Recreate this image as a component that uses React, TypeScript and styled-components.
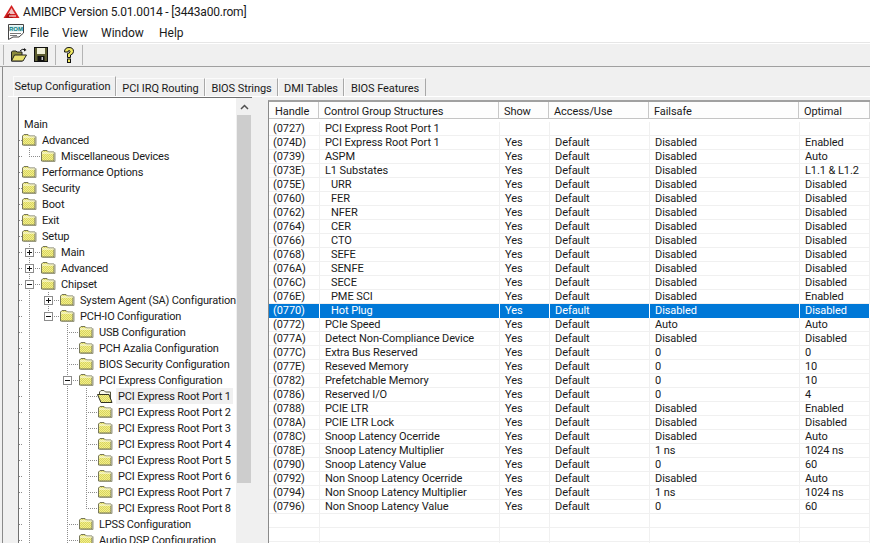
import React from "react";
import styled, { createGlobalStyle } from "styled-components";

const Global = createGlobalStyle`
  html, body { margin: 0; padding: 0; height: 100%; overflow: hidden; background: #f0f0f0; }
  #root { height: 100%; }
`;

const Window = styled.div`
  width: 870px; height: 543px; overflow: hidden; display: flex; flex-direction: column;
  font-family: Roboto, "Liberation Sans", Arial, sans-serif; font-size: 11px; letter-spacing: -0.08px; color: #1a1a1a; background: #f0f0f0;
`;
const TitleBar = styled.div`
  height: 22px; background: #fff; display: flex; align-items: center; gap: 3px; padding-left: 3px; box-sizing: border-box;
  font-size: 12px; letter-spacing: -0.2px; flex: none;
`;
const TitleText = styled.span` padding-top: 2px; `;
const MenuBar = styled.div`
  height: 21px; background: #fff; display: flex; align-items: center; padding-left: 7px; flex: none;
  font-size: 12px; letter-spacing: 0; border-bottom: 1px solid #e6e6e6; box-sizing: border-box;
`;
const MenuGap = styled.span` width: 5px; `;
const MenuItem = styled.span<{ $w: number }>` width: ${(p) => p.$w}px; padding-top: 2px; `;
const ToolBar = styled.div`
  height: 24px; flex: none; display: flex; align-items: center; padding-left: 3px; background: #f0f0f0; box-sizing: border-box;
  border-bottom: 1px solid #a0a0a0; box-shadow: inset 0 1px 0 #fff;
`;
const ToolSep = styled.span<{ $ml?: number }>`
  width: 1px; height: 20px; background: #b4b4b4; margin-left: ${(p) => p.$ml ?? 0}px;
`;
const ToolBtn = styled.span<{ $w: number }>`
  width: ${(p) => p.$w}px; height: 22px; display: flex; align-items: center; justify-content: center;
`;
const Workspace = styled.div`
  flex: 1; min-height: 0; display: flex; flex-direction: column; margin-left: 2px; padding: 9px 0 0 5px;
  border-left: 1px solid #8a8a8a; background: #f0f0f0;
`;
const TabStrip = styled.div` display: flex; height: 20px; flex: none; padding-left: 5px; align-items: flex-end; `;
const Tab = styled.div<{ $active?: boolean; $w: number }>`
  width: ${(p) => p.$w}px; height: ${(p) => (p.$active ? 20 : 18)}px; box-sizing: border-box;
  background: #f0f0f0; border-top: 1px solid #fbfbfb; border-left: 1px solid #fbfbfb; border-right: 1px solid #a8a8a8;
  display: flex; align-items: center; justify-content: center;
  padding-top: ${(p) => (p.$active ? 0 : 2)}px; padding-right: ${(p) => (p.$active ? 4 : 0)}px; white-space: nowrap;
`;
const TabPage = styled.div`
  flex: 1; min-height: 0; display: flex; background: #f0f0f0; border-top: 1px solid #fff; padding-left: 10px; gap: 16px;
`;
const TreePane = styled.div`
  width: 233px; flex: none; display: flex; background: #fff; overflow: hidden;
  border-left: 1px solid #707070; border-top: 1px solid #707070;
`;
const TreeList = styled.div` flex: 1; min-width: 0; padding-top: 18px; overflow: hidden; background: #fff; `;
const TreeRow = styled.div` height: 16px; display: flex; align-items: center; white-space: nowrap; `;
const Stub = styled.span`
  width: 3px; height: 16px; flex: none;
  background: repeating-linear-gradient(to right, #8c8c8c 0 1px, transparent 1px 2px) 0 8px / 100% 1px no-repeat;
`;
const PlainIndent = styled.span` width: 2px; flex: none; `;
const Guide = styled.span<{ $kind: G }>`
  width: 19px; height: 16px; flex: none; display: flex; align-items: center;
  ${(p) => (p.$kind === "blank" ? "" : `background:
    repeating-linear-gradient(to bottom, #8c8c8c 0 1px, transparent 1px 2px) 7px 0 / 1px ${p.$kind === "elbow" ? "9px" : "100%"} no-repeat
    ${p.$kind === "pipe" ? "" : ", repeating-linear-gradient(to right, #8c8c8c 0 1px, transparent 1px 2px) 7px 8px / 12px 1px no-repeat"};`)}
`;
const Expander = styled.span<{ $open: boolean }>`
  width: 9px; height: 9px; box-sizing: border-box; margin-left: 3px; border: 1px solid #8c8c8c; background-color: #fff;
  background-image: linear-gradient(#111, #111)${(p) => (p.$open ? "" : ", linear-gradient(#111, #111)")};
  background-size: 5px 1px${(p) => (p.$open ? "" : ", 1px 5px")};
  background-position: 1px 3px${(p) => (p.$open ? "" : ", 3px 1px")};
  background-repeat: no-repeat;
`;
const RowLabel = styled.span<{ $selected?: boolean }>`
  margin-left: 1px; padding: 0 2px; line-height: 18px; height: 16px; letter-spacing: -0.17px;
  background: ${(p) => (p.$selected ? "#f0f0f0" : "transparent")};
`;
const FolderBox = styled.span` width: 17px; height: 16px; flex: none; display: flex; align-items: center; `;

const ScrollBar = styled.div`
  width: 16px; flex: none; background: #f0f0f0; display: flex; flex-direction: column; box-sizing: border-box; padding: 0 1px;
`;
const ScrollArrow = styled.div` height: 17px; flex: none; display: flex; align-items: center; justify-content: center; `;
const ScrollThumb = styled.div` height: 368px; flex: none; background: #cdcdcd; `;

const TablePane = styled.div`
  flex: 1; min-width: 0; background: #fff; overflow: hidden; border-left: 1px solid #8a8a8a; border-top: 2px solid #a0a0a0;
  margin-top: 3px; display: flex; flex-direction: column;
`;
const HeaderRow = styled.div`
  display: grid; grid-template-columns: 49px 180px 50px 100px 150px 1fr; height: 17px; flex: none; box-sizing: border-box;
  border-bottom: 1px solid #c4c4c4; background: #fdfdfd; padding-left: 1px; margin-bottom: 3px;
`;
const HeaderCell = styled.div`
  padding-left: 5px; line-height: 20px; height: 16px; border-right: 1px solid #c8c8c8; white-space: nowrap;
`;
const DataRow = styled.div<{ $selected?: boolean }>`
  display: grid; grid-template-columns: 49px 180px 50px 100px 150px 1fr; height: 14px; flex: none; padding-left: 2px;
  background: ${(p) => (p.$selected ? "#0078d7" : "#fff")};
  color: ${(p) => (p.$selected ? "#fff" : "#1a1a1a")};
  box-shadow: inset 0 -1px 0 ${(p) => (p.$selected ? "#0078d7" : "#f0f0f0")};
`;
const DataCell = styled.div<{ $selected?: boolean; $sub?: boolean }>`
  padding-left: ${(p) => (p.$sub ? 11 : 5)}px; line-height: 14px;
  border-right: 1px solid ${(p) => (p.$selected ? "#fff" : "#f0f0f0")};
  white-space: nowrap; overflow: hidden;
  &:first-child { padding-left: 2px; }
`;

const Dither = () => (
  <defs>
    <pattern id="dither" width="2" height="2" patternUnits="userSpaceOnUse">
      <rect width="2" height="2" fill="#f4f08c" />
      <rect width="1" height="1" fill="#d8d460" />
      <rect x="1" y="1" width="1" height="1" fill="#d8d460" />
    </pattern>
  </defs>
);
const Folder = () => (
  <svg width="15" height="12" viewBox="0 0 15 12">
    <Dither />
    <path d="M0.5 11 V2 L2 0.5 H6 L7.5 2 H13 V11 Z" fill="url(#dither)" stroke="#77775a" />
    <path d="M1 3 H13" stroke="#fffff0" />
    <path d="M14 2.5 V11.5 H1.5" stroke="#9a9a80" fill="none" />
  </svg>
);
const OpenFolder = () => (
  <svg width="16" height="13" viewBox="0 0 16 13" style={{ marginLeft: -1 }}>
    <Dither />
    <path d="M2.5 4 V2 L4 0.5 H7 L8.5 2 H13.5 V12 H4 Z" fill="#f8f8ec" stroke="#55553f" />
    <path d="M0.5 4.5 H12 L15 12.5 H4 Z" fill="url(#dither)" stroke="#333322" />
  </svg>
);
const AmiLogo = () => (
  <svg width="17" height="15" viewBox="0 0 17 15">
    <path d="M8.5 1 L16.5 14 H0.5 Z" fill="#d42020" />
    <path d="M8.5 4 L12 10 H5 Z" fill="#f0c0c0" />
    <path d="M2 14 L6.5 9 L10 14 Z" fill="#a81010" />
    <path d="M6 12 H13" stroke="#fff" />
  </svg>
);
const RomIcon = () => (
  <svg width="18" height="18" viewBox="0 0 18 18">
    <path d="M1.5 1.5 H16.5 V10 L12 14 H6 L1.5 16.5 Z" fill="#fff" stroke="#444" />
    <rect x="2.5" y="2.5" width="13" height="6" fill="#d8f0f0" />
    <text x="9" y="8" textAnchor="middle" fontFamily="Liberation Sans, sans-serif" fontSize="6" fontWeight="700" fill="#0a7a80">ROM</text>
    <path d="M3 10.5 H14 M3 12.5 H10" stroke="#777" />
  </svg>
);
const OpenIcon = () => (
  <svg width="16" height="14" viewBox="0 0 16 14">
    <path d="M9 3 Q11 0.5 14 1.5" fill="none" stroke="#111" />
    <path d="M13 0 L15.5 2 L13 3.5" fill="#111" />
    <path d="M0.5 13 V4 L1.5 3 H5 L6 4 H11 V13 Z" fill="#8a8a3a" stroke="#222" />
    <path d="M0.5 13 L3.5 7 H15.5 L12 13 Z" fill="#e8e070" stroke="#222" />
  </svg>
);
const SaveIcon = () => (
  <svg width="14" height="15" viewBox="0 0 14 15">
    <rect x="0.5" y="0.5" width="13" height="14" fill="#5c5c30" stroke="#111" />
    <rect x="3" y="1" width="8" height="6" fill="#f0f0d8" />
    <rect x="3.5" y="9" width="7" height="5.5" fill="#111" />
    <rect x="7.5" y="10" width="1.5" height="3" fill="#ccc" />
  </svg>
);
const HelpIcon = () => (
  <svg width="10" height="16" viewBox="0 0 10 16">
    <path d="M0.5 5 Q0.5 0.5 5 0.5 Q9.5 0.5 9.5 4.5 Q9.5 7 6.5 8 V10.5 H3.5 V6.5 Q6 6.5 6 4.5 Q6 3.5 5 3.5 Q4 3.5 4 5 Z" fill="#f0e860" stroke="#111" />
    <rect x="3.5" y="12" width="3" height="3.5" fill="#f0e860" stroke="#111" />
  </svg>
);

type G = "pipe" | "tee" | "elbow" | "blank";
interface Node { label: string; guides: G[]; exp?: "plus" | "minus"; plain?: boolean; open?: boolean; }
const tree: Node[] = [
  { label: "Main", guides: [], plain: true },
  { label: "Advanced", guides: [] },
  { label: "Miscellaneous Devices", guides: ["elbow"] },
  { label: "Performance Options", guides: [] },
  { label: "Security", guides: [] },
  { label: "Boot", guides: [] },
  { label: "Exit", guides: [] },
  { label: "Setup", guides: [] },
  { label: "Main", guides: ["tee"], exp: "plus" },
  { label: "Advanced", guides: ["tee"], exp: "plus" },
  { label: "Chipset", guides: ["tee"], exp: "minus" },
  { label: "System Agent (SA) Configuration", guides: ["pipe", "tee"], exp: "plus" },
  { label: "PCH-IO Configuration", guides: ["pipe", "elbow"], exp: "minus" },
  { label: "USB Configuration", guides: ["pipe", "blank", "tee"] },
  { label: "PCH Azalia Configuration", guides: ["pipe", "blank", "tee"] },
  { label: "BIOS Security Configuration", guides: ["pipe", "blank", "tee"] },
  { label: "PCI Express Configuration", guides: ["pipe", "blank", "tee"], exp: "minus" },
  ...[1, 2, 3, 4, 5, 6, 7, 8].map((n): Node => ({
    label: `PCI Express Root Port ${n}`,
    guides: ["pipe", "blank", "pipe", n === 8 ? "elbow" : "tee"],
    open: n === 1,
  })),
  { label: "LPSS Configuration", guides: ["pipe", "blank", "tee"] },
  { label: "Audio DSP Configuration", guides: ["pipe", "blank", "tee"] },
];

const D = "Disabled";
const rows: [string, string, string, string, string, string][] = [
  ["(0727)", "PCI Express Root Port 1", "", "", "", ""],
  ["(074D)", "PCI Express Root Port 1", "Yes", "Default", D, "Enabled"],
  ["(0739)", "ASPM", "Yes", "Default", D, "Auto"],
  ["(073E)", "L1 Substates", "Yes", "Default", D, "L1.1 & L1.2"],
  ["(075E)", "  URR", "Yes", "Default", D, D],
  ["(0760)", "  FER", "Yes", "Default", D, D],
  ["(0762)", "  NFER", "Yes", "Default", D, D],
  ["(0764)", "  CER", "Yes", "Default", D, D],
  ["(0766)", "  CTO", "Yes", "Default", D, D],
  ["(0768)", "  SEFE", "Yes", "Default", D, D],
  ["(076A)", "  SENFE", "Yes", "Default", D, D],
  ["(076C)", "  SECE", "Yes", "Default", D, D],
  ["(076E)", "  PME SCI", "Yes", "Default", D, "Enabled"],
  ["(0770)", "  Hot Plug", "Yes", "Default", D, D],
  ["(0772)", "PCIe Speed", "Yes", "Default", "Auto", "Auto"],
  ["(077A)", "Detect Non-Compliance Device", "Yes", "Default", D, D],
  ["(077C)", "Extra Bus Reserved", "Yes", "Default", "0", "0"],
  ["(077E)", "Reseved Memory", "Yes", "Default", "0", "10"],
  ["(0782)", "Prefetchable Memory", "Yes", "Default", "0", "10"],
  ["(0786)", "Reserved I/O", "Yes", "Default", "0", "4"],
  ["(0788)", "PCIE LTR", "Yes", "Default", D, "Enabled"],
  ["(078A)", "PCIE LTR Lock", "Yes", "Default", D, D],
  ["(078C)", "Snoop Latency Ocerride", "Yes", "Default", D, "Auto"],
  ["(078E)", "Snoop Latency Multiplier", "Yes", "Default", "1 ns", "1024 ns"],
  ["(0790)", "Snoop Latency Value", "Yes", "Default", "0", "60"],
  ["(0792)", "Non Snoop Latency Ocerride", "Yes", "Default", D, "Auto"],
  ["(0794)", "Non Snoop Latency Multiplier", "Yes", "Default", "1 ns", "1024 ns"],
  ["(0796)", "Non Snoop Latency Value", "Yes", "Default", "0", "60"],
  ["", "", "", "", "", ""],
  ["", "", "", "", "", ""],
  ["", "", "", "", "", ""],
];
const headers = ["Handle", "Control Group Structures", "Show", "Access/Use", "Failsafe", "Optimal"];
const tabs: [string, number][] = [["PCI IRQ Routing", 89], ["BIOS Strings", 73], ["DMI Tables", 66], ["BIOS Features", 82]];

export default function App() {
  return (
    <Window>
      <Global />
      <TitleBar><AmiLogo /><TitleText>AMIBCP Version 5.01.0014 - [3443a00.rom]</TitleText></TitleBar>
      <MenuBar>
        <RomIcon />
        <MenuGap />
        <MenuItem $w={32}>File</MenuItem>
        <MenuItem $w={39}>View</MenuItem>
        <MenuItem $w={58}>Window</MenuItem>
        <MenuItem $w={40}>Help</MenuItem>
      </MenuBar>
      <ToolBar>
        <ToolSep />
        <ToolBtn $w={29}><OpenIcon /></ToolBtn>
        <ToolBtn $w={16}><SaveIcon /></ToolBtn>
        <ToolSep $ml={6} />
        <ToolBtn $w={26}><HelpIcon /></ToolBtn>
        <ToolSep />
      </ToolBar>
      <Workspace>
        <TabStrip>
          <Tab $active $w={103}>Setup Configuration</Tab>
          {tabs.map(([t, w]) => <Tab key={t} $w={w}>{t}</Tab>)}
        </TabStrip>
        <TabPage>
          <TreePane>
            <TreeList>
              {tree.map((n, i) => (
                <TreeRow key={i}>
                  {n.plain ? <PlainIndent /> : <Stub />}
                  {n.guides.map((g, k) => (
                    <Guide key={k} $kind={g}>
                      {k === n.guides.length - 1 && n.exp && <Expander $open={n.exp === "minus"} />}
                    </Guide>
                  ))}
                  {!n.plain && <FolderBox>{n.open ? <OpenFolder /> : <Folder />}</FolderBox>}
                  <RowLabel $selected={n.open}>{n.label}</RowLabel>
                </TreeRow>
              ))}
            </TreeList>
            <ScrollBar>
              <ScrollArrow>
                <svg width="9" height="6" viewBox="0 0 9 6"><path d="M1 5 L4.5 1.5 L8 5" fill="none" stroke="#505050" strokeWidth="1.5" /></svg>
              </ScrollArrow>
              <ScrollThumb />
            </ScrollBar>
          </TreePane>
          <TablePane>
            <HeaderRow>{headers.map((h) => <HeaderCell key={h}>{h}</HeaderCell>)}</HeaderRow>
            {rows.map((r, i) => {
              const sel = i === 13;
              return (
                <DataRow key={i} $selected={sel}>
                  {r.map((c, j) => {
                    const sub = j === 1 && c.startsWith("  ");
                    return <DataCell key={j} $selected={sel} $sub={sub}>{sub ? c.trim() : c}</DataCell>;
                  })}
                </DataRow>
              );
            })}
          </TablePane>
        </TabPage>
      </Workspace>
    </Window>
  );
}
